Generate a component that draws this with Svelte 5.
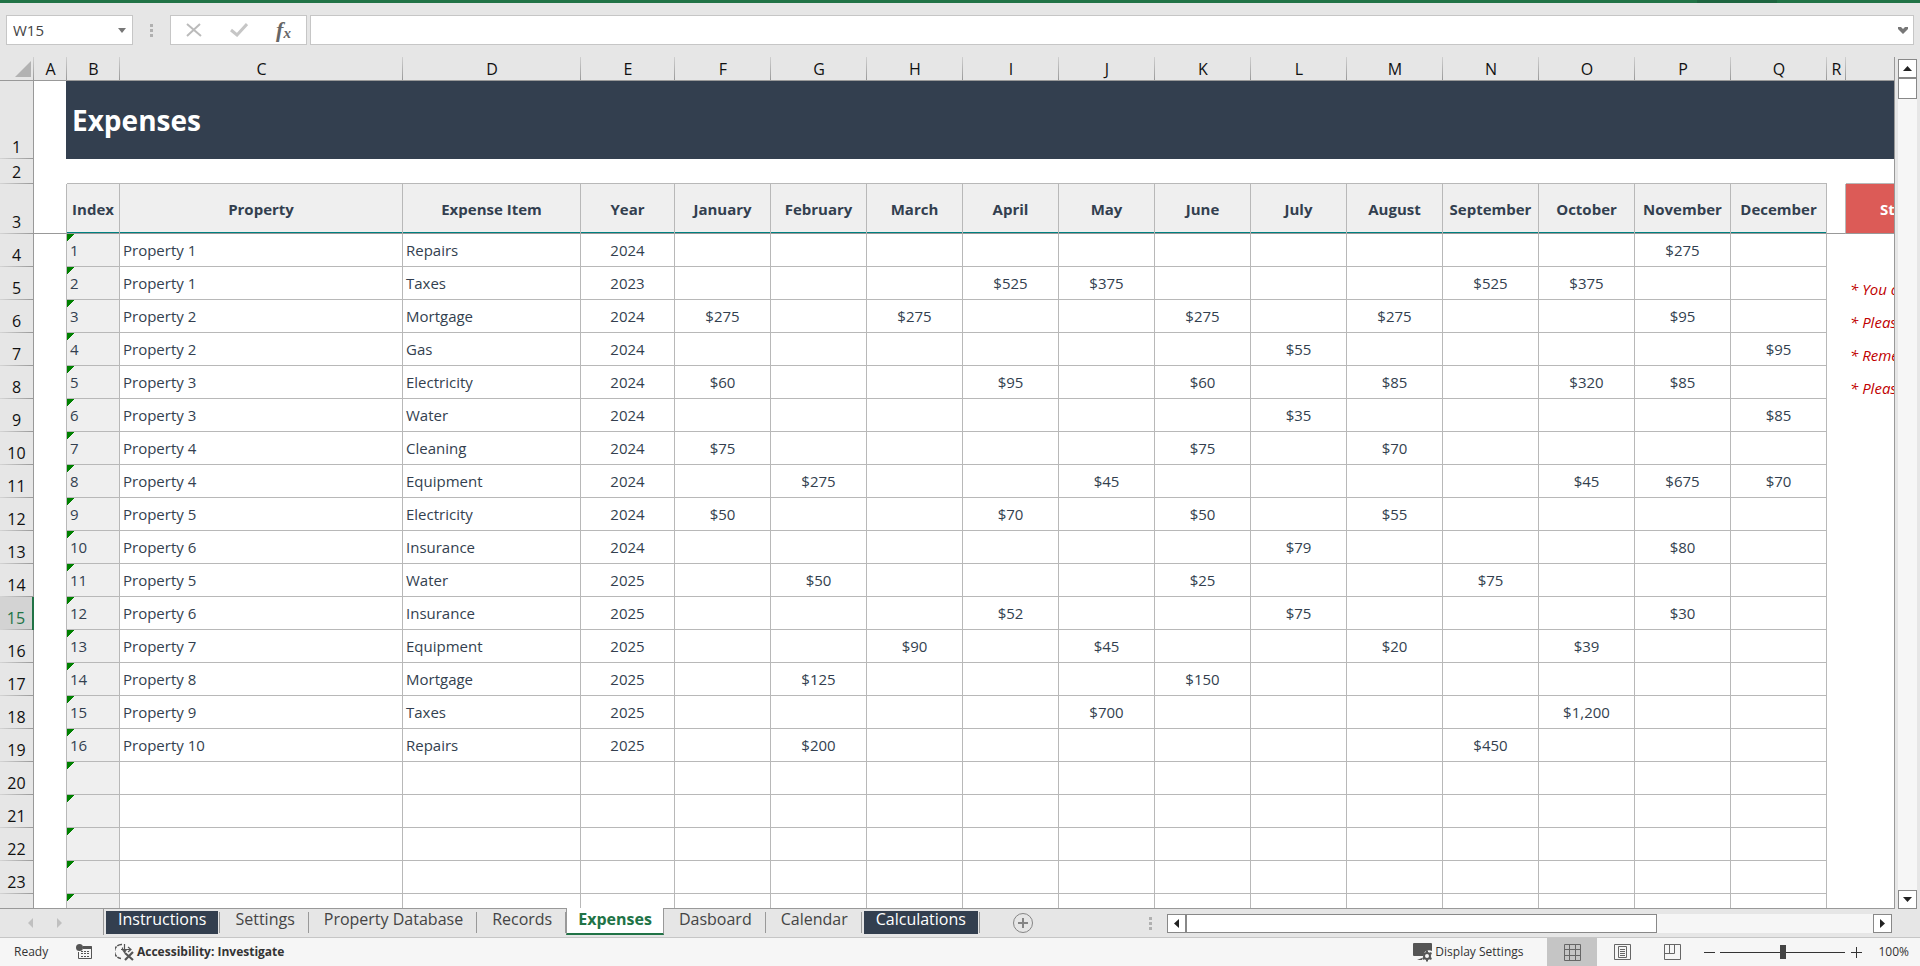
<script>
  const columns = [
    { id: 'A', width: 33 }, { id: 'B', width: 53 }, { id: 'C', width: 283 },
    { id: 'D', width: 178 }, { id: 'E', width: 94 },
    ...'FGHIJKLMNOPQ'.split('').map((id) => ({ id, width: 96 })),
    { id: 'R', width: 19 }
  ];
  const months = ['January', 'February', 'March', 'April', 'May', 'June', 'July', 'August', 'September', 'October', 'November', 'December'];
  // Amounts are keyed by month number, January being 0.
  const expenses = [
    ['Property 1', 'Repairs', 2024, { 10: '$275' }],
    ['Property 1', 'Taxes', 2023, { 3: '$525', 4: '$375', 8: '$525', 9: '$375' }],
    ['Property 2', 'Mortgage', 2024, { 0: '$275', 2: '$275', 5: '$275', 7: '$275', 10: '$95' }],
    ['Property 2', 'Gas', 2024, { 6: '$55', 11: '$95' }],
    ['Property 3', 'Electricity', 2024, { 0: '$60', 3: '$95', 5: '$60', 7: '$85', 9: '$320', 10: '$85' }],
    ['Property 3', 'Water', 2024, { 6: '$35', 11: '$85' }],
    ['Property 4', 'Cleaning', 2024, { 0: '$75', 5: '$75', 7: '$70' }],
    ['Property 4', 'Equipment', 2024, { 1: '$275', 4: '$45', 9: '$45', 10: '$675', 11: '$70' }],
    ['Property 5', 'Electricity', 2024, { 0: '$50', 3: '$70', 5: '$50', 7: '$55' }],
    ['Property 6', 'Insurance', 2024, { 6: '$79', 10: '$80' }],
    ['Property 5', 'Water', 2025, { 1: '$50', 5: '$25', 8: '$75' }],
    ['Property 6', 'Insurance', 2025, { 3: '$52', 6: '$75', 10: '$30' }],
    ['Property 7', 'Equipment', 2025, { 2: '$90', 4: '$45', 7: '$20', 9: '$39' }],
    ['Property 8', 'Mortgage', 2025, { 1: '$125', 5: '$150' }],
    ['Property 9', 'Taxes', 2025, { 4: '$700', 9: '$1,200' }],
    ['Property 10', 'Repairs', 2025, { 1: '$200', 8: '$450' }]
  ];
  const notes = { 5: '* You can', 6: '* Please', 7: '* Remember', 8: '* Please' };
  const rows = Array.from({ length: 21 }, (_, i) => {
    const [property = '', item = '', year = '', amounts = {}] = expenses[i] ?? [];
    return { number: i + 4, index: i < expenses.length ? i + 1 : '', property, item, year, amounts };
  });
  const tabs = [
    { name: 'Instructions', kind: 'dark' }, { name: 'Settings' }, { name: 'Property Database' },
    { name: 'Records' }, { name: 'Expenses', kind: 'active' }, { name: 'Dasboard' },
    { name: 'Calendar' }, { name: 'Calculations', kind: 'dark' }
  ];
  let zoom = $state(100);
</script>

<div class="app">
  <div class="accent"><span></span></div>
  <header class="formula">
    <div class="namebox">
      <input aria-label="Name box" value="W15" />
      <button aria-label="Cell names"><svg width="8" height="5"><path d="M0 0h8L4 5z" fill="#777" /></svg></button>
    </div>
    <div class="dots"><i></i><i></i><i></i></div>
    <div class="tools">
      <button aria-label="Cancel"><svg width="16" height="14" viewBox="0 0 16 14" fill="none" stroke="#bbb" stroke-width="2"><path d="M1 1l14 12M14 1L1 13" /></svg></button>
      <button aria-label="Enter"><svg width="18" height="14" viewBox="0 0 18 14" fill="none" stroke="#c6c6c6" stroke-width="3"><path d="M1 7l6 5L17 1" /></svg></button>
      <button aria-label="Insert function" class="fx">f<sub>x</sub></button>
    </div>
    <div class="entry">
      <input aria-label="Formula" />
      <button aria-label="Expand formula bar"><svg width="10" height="7" viewBox="0 0 10 7"><path d="M0 0h3l2 2 2-2h3v2L5 7 0 2z" fill="#777" /></svg></button>
    </div>
  </header>

  <main>
    <div class="sheet">
      <table>
        <colgroup>
          <col style="width: 34px" />
          {#each columns as c}<col style="width: {c.width}px" />{/each}
          <col />
        </colgroup>
        <thead>
          <tr class="letters">
            <th class="corner"><svg width="16" height="16"><path d="M16 0v16H0z" fill="#b2b2b2" /></svg></th>
            {#each columns as c}<th scope="col">{c.id}</th>{/each}
            <th class="last"></th>
          </tr>
        </thead>
        <tbody>
          <tr class="title">
            <th class="num" scope="row">1</th>
            <td class="join"></td>
            <td class="banner" colspan="18">Expenses</td>
          </tr>
          <tr class="gap">
            <th class="num" scope="row">2</th>
            <td></td>
            <td class="under" colspan="16"></td>
            <td></td>
            <td class="under"></td>
          </tr>
          <tr class="heads">
            <th class="num" scope="row">3</th>
            <td class="edge"></td>
            {#each ['Index', 'Property', 'Expense Item', 'Year', ...months] as h}<th class="head">{h}</th>{/each}
            <td class="edge"></td>
            <th class="steps">Steps</th>
          </tr>
          {#each rows as r}
            <tr class="data">
              <th class="num" class:selected={r.number === 15} scope="row">{r.number}</th>
              <td class="edge"></td>
              <td class="cell index">{r.index}</td>
              <td class="cell">{r.property}</td>
              <td class="cell">{r.item}</td>
              <td class="cell center">{r.year}</td>
              {#each months as _, m}<td class="cell center">{r.amounts[m] ?? ''}</td>{/each}
              <td></td>
              <td class="note">{notes[r.number] ?? ''}</td>
            </tr>
          {/each}
        </tbody>
      </table>
    </div>
    <div class="vscroll">
      <button aria-label="Scroll up"><svg width="9" height="5"><path d="M0 5h9L4.500 0z" fill="#222" /></svg></button>
      <div class="thumb"></div>
      <button class="end" aria-label="Scroll down"><svg width="9" height="5"><path d="M0 0h9L4.500 5z" fill="#222" /></svg></button>
    </div>
  </main>

  <div class="tabbar">
    <div class="arrows">
      <button aria-label="Previous sheet"><svg width="5" height="10"><path d="M5 0v10L0 5z" fill="#c0c0c0" /></svg></button>
      <button aria-label="Next sheet"><svg width="5" height="10"><path d="M0 0v10l5-5z" fill="#c0c0c0" /></svg></button>
    </div>
    <nav>
      {#each tabs as t}<button class="tab {t.kind ?? ''}"><span>{t.name}</span></button>{/each}
    </nav>
    <button class="add" aria-label="New sheet"><svg width="22" height="22" viewBox="0 0 22 22" fill="none" stroke="#858585"><circle cx="11" cy="11" r="9.500" /><path d="M11 6v10M6 11h10" stroke-width="2" /></svg></button>
    <div class="dots split"><i></i><i></i><i></i></div>
    <div class="hscroll">
      <button aria-label="Scroll left"><svg width="5" height="9"><path d="M5 0v9L0 4.500z" fill="#222" /></svg></button>
      <div class="thumb"></div>
      <button class="end" aria-label="Scroll right"><svg width="5" height="9"><path d="M0 0v9l5-4.500z" fill="#222" /></svg></button>
    </div>
  </div>

  <footer>
    <span class="ready">Ready</span>
    <button class="macro" aria-label="Record macro">
      <svg width="16" height="16" viewBox="0 0 16 16" fill="none" stroke="#555"><path d="M7 2.500h8.500v12h-13V8" /><path d="M7 3.500h8.500" stroke-width="3" /><path d="M5 7.500h2m1 0h2m1 0h2M5 9.500h2m1 0h2m1 0h2M5 12.500h2m1 0h2m1 0h2" /><circle cx="3.500" cy="3.500" r="3.500" fill="#555" stroke="none" /></svg>
    </button>
    <button class="access">
      <svg width="20" height="18" viewBox="0 0 20 18" fill="none" stroke="#555"><path d="M7 1.500A7 7 0 0 0 6 15.500" stroke-width="1.500" stroke-dasharray="5 1" /><path d="M9.500 1v8M6 6.500h10M7.500 4.500v2l2 3 2-3M13 4l3 2.500L13 9" stroke-width="1.200" /><path d="M10 10l8 7M18 9l-8 8" stroke-width="2.200" /></svg>
      Accessibility: Investigate
    </button>
    <button class="display">
      <svg width="20" height="19" viewBox="0 0 20 19"><path d="M1 0h17q1 0 1 1v7a6 6 0 0 0-9 5H1q-1 0-1-1V1q0-1 1-1zM4 17l5-2v2z" fill="#555" /><circle cx="14" cy="13" r="3" fill="none" stroke="#555" stroke-width="2" /><path d="M14 7.500v2m0 7v2M9.500 10l2 1m5 4l2 1M9.500 16l2-1m5-4l2-1" stroke="#555" stroke-width="2" /></svg>
      Display Settings
    </button>
    <div class="views">
      <button class="on" aria-label="Normal view"><svg width="17" height="17" viewBox="0 0 17 17" fill="none" stroke="#666"><path d="M.5.5h16v16H.5zM5.500.5v16M11.500.5v16M.5 5.500h16M.5 11.500h16" /></svg></button>
      <button aria-label="Page layout"><svg width="17" height="16" viewBox="0 0 17 16" fill="none" stroke="#666"><path d="M.5.5h16v15H.5zM4.500 2.500h8v11h-8zM6 5.500h5M6 7.500h5M6 9.500h5M6 11.500h5" /></svg></button>
      <button aria-label="Page break preview"><svg width="17" height="16" viewBox="0 0 17 16" fill="none" stroke="#666"><path d="M.5.5h16v15H.5zM.5 9.500h10v-9M5.500.5v9" /></svg></button>
    </div>
    <button class="step" aria-label="Zoom out"><svg width="11" height="11"><path d="M0 5.500h11" stroke="#333" /></svg></button>
    <input type="range" aria-label="Zoom" min="0" max="200" bind:value={zoom} />
    <button class="step" aria-label="Zoom in"><svg width="11" height="11"><path d="M0 5.500h11M5.500 0v11" stroke="#333" /></svg></button>
    <span class="percent">{zoom}%</span>
  </footer>
</div>

<style>
  :global(body) { margin: 0; }
  .app {
    height: 100vh; display: flex; flex-direction: column; overflow: hidden;
    background: #e6e6e6; color: #333f4f; font-family: "Open Sans", "Noto Sans", sans-serif;
  }
  .app * { box-sizing: border-box; }
  button, input { font: inherit; color: inherit; border: 0; padding: 0; margin: 0; background: none; outline: none; }
  button { display: flex; align-items: center; justify-content: center; white-space: nowrap; }
  svg { display: block; flex: none; }

  .accent { height: 3px; flex: none; background: #217346; display: flex; justify-content: flex-end; padding-right: 143px; }
  .accent span { width: 80px; background: #1e6540; }
  .formula { flex: none; display: flex; align-items: center; height: 54px; padding: 0 6px; }
  .namebox, .tools, .entry { height: 30px; border: 1px solid #c6c6c6; background: #fff; display: flex; align-items: center; }
  .namebox { width: 127px; padding: 0 6px; color: #444; font-size: 15px; }
  .namebox input { min-width: 0; flex: 1; }
  .dots { display: flex; flex-direction: column; gap: 2px; margin: 0 17px; }
  .dots i { width: 3px; height: 3px; background: #b0b0b0; }
  .tools { width: 137px; margin-right: 3px; }
  .tools button { flex: 1; height: 28px; }
  .fx { font: italic bold 22px "Liberation Serif", serif; color: #666; }
  .fx sub { font-size: 15px; vertical-align: baseline; margin-top: 7px; }
  .entry { flex: 1; padding-right: 5px; }
  .entry input { flex: 1; }

  main { flex: 1; min-height: 0; display: flex; }
  .sheet { flex: 1; min-width: 0; overflow: hidden; background: linear-gradient(#e6e6e6 24px, #fff 24px); border-right: 1px solid #999; border-bottom: 1px solid #999; }
  table { width: 100%; table-layout: fixed; border-collapse: separate; border-spacing: 0; }
  th, td { padding: 0; font-weight: 400; white-space: nowrap; overflow: hidden; }
  .letters th {
    height: 24px; font-size: 16px; line-height: 20px; color: #111;
    border-bottom: 1px solid #999;
    background: linear-gradient(#d0d0d0, #999) right / 1px 100% no-repeat #e6e6e6;
  }
  .letters .last { background: #e6e6e6; }
  .corner svg { margin: 0 3px 0 auto; }
  .num {
    vertical-align: bottom; font-size: 16px; line-height: 24px; color: #111; border-right: 1px solid #999;
    background: linear-gradient(90deg, #d4d4d4, #999) bottom / 100% 1px no-repeat #e6e6e6;
  }
  .selected { background-color: #d3d3d3; color: #217346; border-right: 2px solid #217346; }
  .title > * { height: 78px; }
  .join { border-right: 1px solid #333f4f; }
  .banner { background: #333f4f; color: #fff; font-size: 28px; font-weight: 700; line-height: 36px; padding-left: 5px; }
  .gap > * { height: 25px; }
  .under { border-bottom: 1px solid #b8b8b8; }
  .heads > * { height: 50px; border-bottom: 1px solid #999; }
  .heads .num { border-bottom: 0; }
  .head, .steps { font-size: 15px; font-weight: 700; line-height: 20px; border-right: 1px solid #b8b8b8; }
  .head { background: linear-gradient(#008080, #008080) bottom / 100% 1px no-repeat #efefef; }
  .steps { background: #dc5b57; color: #fff; border-right: 0; text-align: left; padding-left: 34px; }
  .data > * { height: 33px; }
  .edge { border-right: 1px solid #b8b8b8; }
  .cell { font-size: 15px; line-height: 20px; padding-left: 3px; border-right: 1px solid #b8b8b8; border-bottom: 1px solid #b8b8b8; }
  .center { text-align: center; padding-left: 0; }
  .index { background: linear-gradient(135deg, #008000 5px, transparent 5px) 0 0 / 7px 7px no-repeat #efefef; }
  .note { vertical-align: bottom; color: #c00000; font-size: 15px; font-style: italic; line-height: 22px; padding-left: 4px; }

  .vscroll, .hscroll { display: flex; background: #f6f6f6; }
  .vscroll { width: 19px; flex: none; flex-direction: column; margin: 2px 3px 0 3px; }
  .vscroll button, .hscroll button { width: 19px; height: 19px; flex: none; border: 1px solid #888; background: #fff; }
  .thumb { border: 1px solid #888; background: #fff; }
  .vscroll .thumb { height: 21px; }
  .end { margin-top: auto; }

  .tabbar { flex: none; height: 29px; display: flex; align-items: center; border-bottom: 1px solid #c6c6c6; }
  .arrows { width: 103px; flex: none; display: flex; gap: 24px; padding-left: 28px; }
  nav { display: flex; align-self: stretch; font-size: 16px; color: #444; }
  .tab { align-items: flex-start; height: 26px; padding: 2px 2px 0; background: linear-gradient(#999, #999) right 3px / 1px 21px no-repeat; }
  .tab:first-child { border-left: 1px solid #999; }
  .tab span { padding: 0 12px 0 13px; line-height: 17px; height: 23px; }
  .tab.dark span { padding: 0 12px; background: #333f4f; color: #fff; }
  .tab.active { margin-top: -1px; height: 27px; padding-top: 3px; background: #fff; color: #217346; font-weight: 700; border: 1px solid #999; border-top: 0; border-bottom: 2px solid #217346; }
  .tab.active span { padding: 0 9px; height: 20px; }
  .add { margin-left: 32px; }
  .split { margin: 0 15px 0 auto; }
  .hscroll { flex: 0 1 725px; margin-right: 28px; }
  .hscroll .thumb { width: 65%; height: 19px; }
  .hscroll .end { margin: 0 0 0 auto; }

  footer { flex: none; height: 28px; display: flex; align-items: center; background: #f6f6f6; color: #333; font-size: 12px; line-height: 18px; }
  .ready { width: 76px; padding-left: 14px; }
  .macro { margin-right: 23px; }
  .access { gap: 2px; font-weight: 700; }
  .display { gap: 2px; margin: 0 24px 0 auto; }
  .views { display: flex; align-self: stretch; margin-right: 7px; }
  .views button { width: 50px; }
  .views .on { background: #c5c5c5; }
  .step { width: 11px; height: 18px; }
  input[type="range"] {
    appearance: none; width: 125px; height: 14px; margin: 0 6px 0 5px;
    background: linear-gradient(#333, #333) center / 100% 1px no-repeat;
  }
  input[type="range"]::-webkit-slider-thumb { appearance: none; width: 6px; height: 14px; background: #444; border: 0; border-radius: 0; }
  .percent { margin-left: 16px; padding-right: 11px; }
</style>
